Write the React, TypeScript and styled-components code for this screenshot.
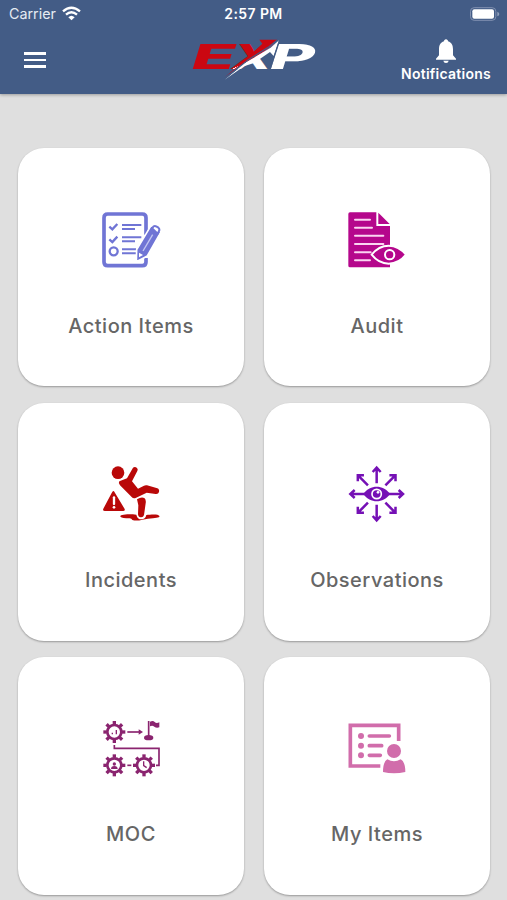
import { FC, ReactNode } from "react";
import styled, { createGlobalStyle } from "styled-components";

const GlobalStyle = createGlobalStyle`
  * {
    box-sizing: border-box;
  }

  body {
    margin: 0;
    background-color: #dfdfdf;
    font-family: Inter, "Liberation Sans", sans-serif;
    overflow: hidden;
  }
`;

const Screen = styled.div`
  height: 900px;
  display: flex;
  flex-direction: column;
  overflow: hidden;
  background-color: #dfdfdf;
`;

const Header = styled.header`
  height: 94px;
  flex-shrink: 0;
  background-color: #435c86;
  color: #ffffff;
  box-shadow: 0 1px 3px rgba(0, 0, 0, 0.3);
`;

const StatusBar = styled.div`
  height: 27px;
  padding: 0 7px 0 9px;
  display: grid;
  grid-template-columns: 1fr auto 1fr;
  align-items: center;
`;

const Carrier = styled.div`
  display: flex;
  align-items: center;
  gap: 6px;
  font-size: 14.3px;
  color: #e6ebf3;
`;

const Time = styled.div`
  margin-right: 2px;
  font-size: 14px;
  font-weight: 600;
  letter-spacing: 0.4px;
`;

const Battery = styled.div`
  display: flex;
  justify-content: flex-end;
`;

const Toolbar = styled.div`
  height: 67px;
  padding: 0 16px;
  display: grid;
  grid-template-columns: 1fr auto 1fr;
`;

const MenuButton = styled.button`
  width: 22px;
  height: 16px;
  margin: 25px 0 0 8px;
  padding: 0;
  border: 0;
  background: none;
  display: flex;
  flex-direction: column;
  justify-content: space-between;
`;

const MenuLine = styled.span`
  display: block;
  width: 22px;
  height: 2.6px;
  background-color: #ffffff;
`;

const LogoSvg = styled.svg`
  width: 128px;
  height: 43.33px;
  margin-top: 10px;
  overflow: visible;
`;

const Notifications = styled.button`
  justify-self: end;
  padding: 12px 0 0;
  border: 0;
  background: none;
  color: #ffffff;
  font: 600 14px/18px Inter, "Liberation Sans", sans-serif;
  letter-spacing: 0.25px;
  display: flex;
  flex-direction: column;
  align-items: center;
  gap: 1px;
`;

const Grid = styled.main`
  padding: 54.4px 17px 0 18px;
  display: grid;
  grid-template-columns: 1fr 1fr;
  gap: 16.2px 20px;
`;

const Card = styled.section`
  height: 238px;
  padding-top: 61.5px;
  border-radius: 26px;
  background-color: #ffffff;
  box-shadow: 0 1px 2px rgba(0, 0, 0, 0.32);
  display: flex;
  flex-direction: column;
  align-items: center;
`;

const CardIcon = styled.svg`
  width: 60px;
  height: 60px;
  display: block;
`;

const Label = styled.h2`
  margin: 42px 0 0;
  font-size: 20px;
  font-weight: 500;
  line-height: 28px;
  letter-spacing: 0.5px;
  color: #666666;
`;

const WifiIcon: FC = () => (
  <svg width="19" height="15" viewBox="0 0 57 45" fill="none" stroke="#fff">
    <path d="M3 16Q28 -6 54 16" strokeWidth="7" />
    <path d="M12 26Q28 11 45 26" strokeWidth="7" />
    <path d="M19 34Q28 25 38 34L28.500 43Z" fill="#fff" stroke="none" />
  </svg>
);

const BatteryIcon: FC = () => (
  <svg width="30" height="14" viewBox="0 0 90 42">
    <rect x="1.500" y="2" width="76" height="38" rx="11" fill="none" stroke="#8090b0" strokeWidth="3" />
    <rect x="7" y="7" width="65" height="28" rx="6" fill="#fff" />
    <path d="M82 14Q88 16 88 21T82 28Z" fill="#8f9fba" />
  </svg>
);

const BellIcon: FC = () => (
  <svg width="22" height="25" viewBox="0 0 66 75" fill="#fff">
    <path d="M33 1C37 1 39 4 39 7C50 10 54 20 54 31V49L63 59V62H3V59L12 49V31C12 20 16 10 27 7C27 4 29 1 33 1Z" />
    <path d="M25 65H41Q40 72 33 72T25 65Z" />
  </svg>
);

const Logo: FC = () => (
  <LogoSvg viewBox="60 110 384 130" fontFamily="Inter, sans-serif" fontSize="103" fontWeight="800">
    <defs>
      <linearGradient id="split" gradientUnits="userSpaceOnUse" x1="30" y1="-52" x2="60" y2="-14">
        <stop offset="50%" stopColor="#cb0711" />
        <stop offset="50%" stopColor="#fff" />
      </linearGradient>
    </defs>
    <text transform="translate(56 207) skewX(-17) scale(2.08 1)" fill="#cb0711">E</text>
    <text transform="translate(178 207) skewX(-17) scale(1.5 1)" fill="url(#split)">X</text>
    <text transform="translate(291 207) skewX(-17) scale(2.02 1)" fill="#fff">P</text>
    <path d="M165 230L232 174L277 130L268 118H322L294 144L224 187Z" fill="#cb0711" />
    <path d="M164 238L228 186L302 142L327 120L311 167L300 155L252 188L222 198Z" fill="#fff" />
    <path d="M165 234L233 180L297 139L325 117" fill="none" stroke="#435c86" strokeWidth="3.500" />
    <path d="M328 122L300 208" fill="none" stroke="#435c86" strokeWidth="4" />
  </LogoSvg>
);

const ActionItemsIcon: FC = () => (
  <CardIcon viewBox="33 30 180 180" fill="none" stroke="#7075d5">
    <path d="M168 104V53Q168 42 157 42H53Q42 42 42 53V186Q42 197 53 197H157Q168 197 168 186V174" strokeWidth="11" />
    <path d="M58 80L67 88L82 72M58 118L67 126L82 110" strokeWidth="7" />
    <circle cx="71" cy="154" r="12" strokeWidth="7" />
    <path d="M96 75H154M96 87H135M96 112H154M96 124H135M96 148H138M96 160H138" strokeWidth="6" />
    <path d="M183 77L213 96L172 168L139 185L140 149Z" fill="#7075d5" stroke="#fff" strokeWidth="5" />
    <path d="M186 85L191 79Q195 77 200 80L205 83Q210 88 207 93L203 101Z" fill="#fff" strokeWidth="6" />
    <path d="M188 104L159 153" stroke="#c5c8f2" strokeWidth="4" />
    <path d="M147 158L159 165L147 172Z" fill="#fff" stroke="none" />
  </CardIcon>
);

const AuditIcon: FC = () => (
  <CardIcon viewBox="33 30 180 180" fill="#b5078c">
    <path d="M42 37H121V78H162V202H42Q37 202 37 197V42Q37 37 42 37Z" />
    <path d="M127 38L161 72H127Z" />
    <path d="M57 59H102M57 83H108M57 107H142M57 132H142M57 157H104M57 181H102" stroke="#fbd5f1" strokeWidth="6" strokeLinecap="round" />
    <path d="M107 164C135 128 181 128 210 164C181 200 135 200 107 164Z" stroke="#fff" strokeWidth="6" />
    <circle cx="161" cy="164" r="14" fill="#b5078c" stroke="#fff" strokeWidth="6" />
  </CardIcon>
);

const IncidentsIcon: FC = () => (
  <CardIcon viewBox="33 30 180 180" fill="#b90808">
    <circle cx="84" cy="56" r="19" />
    <path d="M129 41Q135 36 141 42Q145 46 142 51L126 82L144 104L162 95Q166 93 171 94L202 103Q209 106 207 114Q205 121 197 120L170 116L137 132Q130 135 125 129L90 94Q84 87 88 82L111 73Z" />
    <path d="M141 136Q154 127 163 132Q169 137 167 148L162 183Q160 191 152 190Q145 190 144 181L145 154Z" />
    <path d="M72 112L104 165Q106 171 99 171H45Q37 171 40 164L65 117Q69 109 72 112Z" />
    <path d="M72 130V150" stroke="#fff" strokeWidth="7" strokeLinecap="round" />
    <circle cx="72" cy="160" r="4" fill="#fff" />
    <path d="M139 182C116 179 85 181 92 189Q96 193 119 193Q125 194 127 198Q140 202 157 197L174 194Q208 193 209 187C205 179 182 182 169 183Q166 196 154 196T139 182Z" />
  </CardIcon>
);

const ObservationsIcon: FC = () => (
  <CardIcon viewBox="33 30 180 180" fill="none" stroke="#7510b5" strokeWidth="7.500">
    {[0, 90, 180, 270].map((angle) => (
      <path key={angle} transform={`rotate(${angle} 122 120)`} d="M122 88V42M110 54L122 41L134 54" />
    ))}
    {[45, 135, 225, 315].map((angle) => (
      <path key={angle} transform={`rotate(${angle} 122 120)`} d="M122 83V41M109 53L122 40L135 53" />
    ))}
    <path d="M82 120C103 91 141 91 162 120C141 149 103 149 82 120Z" fill="#7510b5" stroke="none" />
    <circle cx="122" cy="120" r="14" fill="#7510b5" stroke="#fff" strokeWidth="5" />
    <circle cx="126" cy="115" r="4" fill="#fff" stroke="none" />
  </CardIcon>
);

interface GearProps {
  x: number;
  y: number;
  children: ReactNode;
}

const Gear: FC<GearProps> = ({ x, y, children }) => (
  <g transform={`translate(${x} ${y})`}>
    <circle r="21" fill="none" strokeWidth="8" />
    {[0, 45, 90, 135, 180, 225, 270, 315].map((angle) => (
      <path key={angle} transform={`rotate(${angle})`} d="M0 -23V-33" strokeWidth="10" />
    ))}
    {children}
  </g>
);

const MocIcon: FC = () => (
  <CardIcon viewBox="33 30 180 180" fill="#8a246f" stroke="#8a246f">
    <Gear x={73} y={72}>
      <path d="M-6 2V7M6 -6V7" strokeWidth="4" />
    </Gear>
    <Gear x={73} y={172}>
      <circle cy="-4" r="5" stroke="none" />
      <path d="M-10 11Q-10 2 0 2T10 11Z" stroke="none" />
    </Gear>
    <Gear x={162} y={172}>
      <path d="M-1 -12V1L8 7" fill="none" strokeWidth="4" />
    </Gear>
    <path d="M112 72H148" strokeWidth="5" />
    <path d="M146 64L159 72L146 80Z" stroke="none" />
    <path d="M176 39V88" strokeWidth="5" />
    <path d="M180 41Q189 36 194 42T208 43V58Q199 61 193 56T180 55Z" stroke="none" />
    <ellipse cx="176" cy="89" rx="14" ry="8" stroke="none" />
    <path d="M73 111V121H207V172H198" fill="none" strokeWidth="5" />
    <path d="M112 172H124" strokeWidth="5" />
  </CardIcon>
);

const MyItemsIcon: FC = () => (
  <CardIcon viewBox="33 30 180 180" fill="#d16dab" stroke="#d16dab">
    <path d="M188 99V52H43V174H133" fill="none" strokeWidth="11" />
    <path d="M100 84H160M100 113H137M100 142H133" strokeWidth="11" strokeLinecap="round" />
    <circle cx="75" cy="84" r="9" stroke="none" />
    <circle cx="75" cy="113" r="9" stroke="none" />
    <circle cx="75" cy="142" r="9" stroke="none" />
    <circle cx="174" cy="129" r="21" stroke="none" />
    <path d="M154 154Q174 166 194 154Q208 161 208 192Q191 196 174 196T141 192Q141 161 154 154Z" stroke="none" />
  </CardIcon>
);

const items = [
  { label: "Action Items", Icon: ActionItemsIcon },
  { label: "Audit", Icon: AuditIcon },
  { label: "Incidents", Icon: IncidentsIcon },
  { label: "Observations", Icon: ObservationsIcon },
  { label: "MOC", Icon: MocIcon },
  { label: "My Items", Icon: MyItemsIcon },
];

const App: FC = () => {
  return (
    <>
      <GlobalStyle />
      <Screen>
        <Header>
          <StatusBar>
            <Carrier>
              Carrier
              <WifiIcon />
            </Carrier>
            <Time>2:57 PM</Time>
            <Battery>
              <BatteryIcon />
            </Battery>
          </StatusBar>
          <Toolbar>
            <MenuButton>
              <MenuLine />
              <MenuLine />
              <MenuLine />
            </MenuButton>
            <Logo />
            <Notifications>
              <BellIcon />
              Notifications
            </Notifications>
          </Toolbar>
        </Header>
        <Grid>
          {items.map(({ label, Icon }) => (
            <Card key={label}>
              <Icon />
              <Label>{label}</Label>
            </Card>
          ))}
        </Grid>
      </Screen>
    </>
  );
};

export default App;
